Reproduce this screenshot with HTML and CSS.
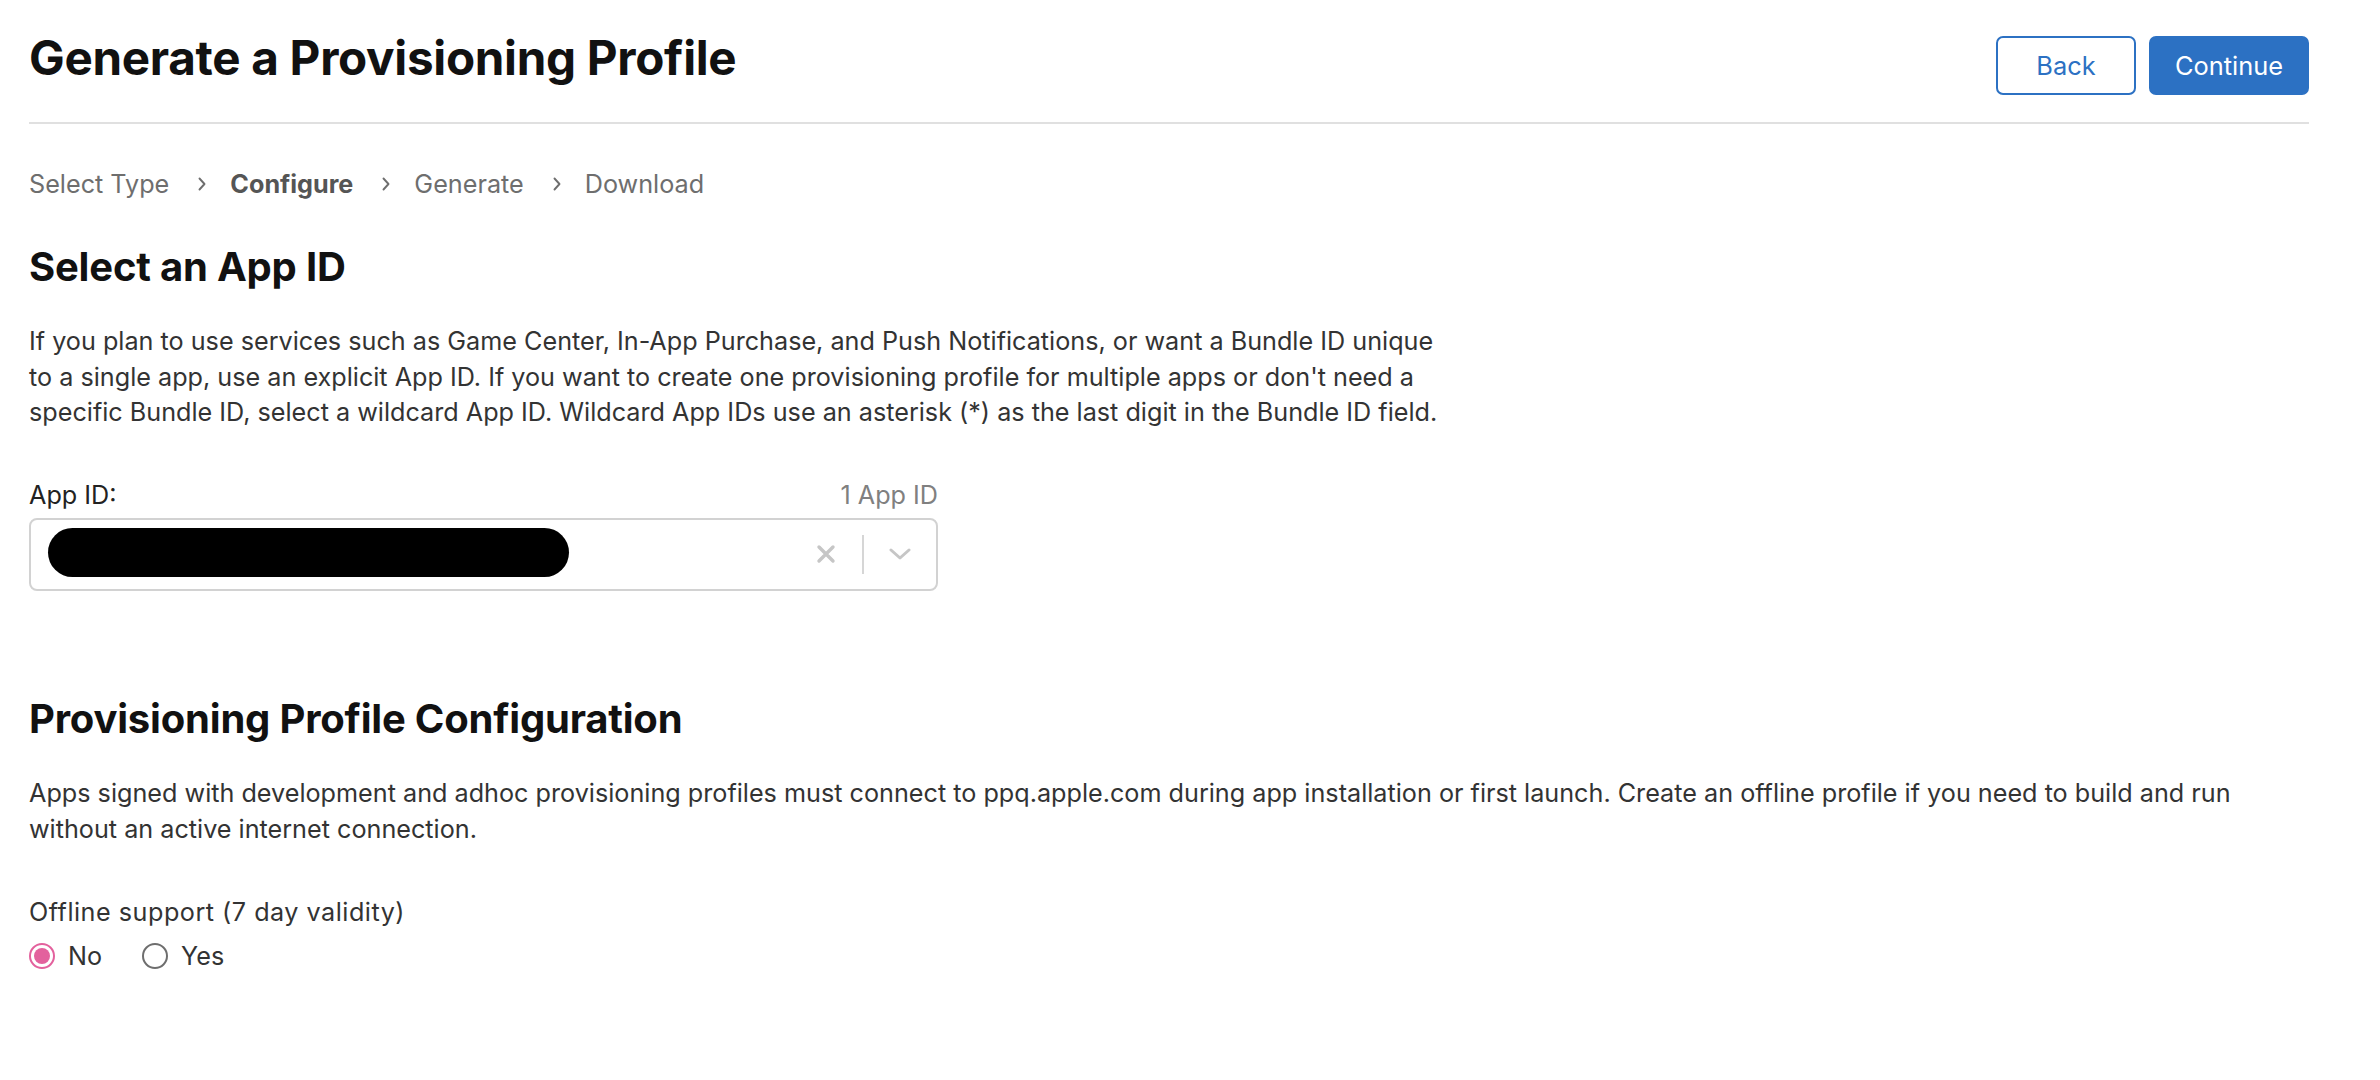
FILE: index.html
```html
<!DOCTYPE html>
<html lang="en">
<head>
<meta charset="utf-8">
<title>Generate a Provisioning Profile</title>
<link rel="stylesheet" href="styles.css">
</head>
<body>
<div class="page">
  <header class="top">
    <h1 class="title">Generate a Provisioning Profile</h1>
    <div class="actions">
      <button class="btn btn-outline" type="button">Back</button>
      <button class="btn btn-primary" type="button">Continue</button>
    </div>
  </header>

  <nav class="steps">
    <span class="step">Select Type</span>
    <svg class="chev" viewBox="0 0 10 16" aria-hidden="true"><path d="M2.5 2.5 L7.5 8 L2.5 13.5"/></svg>
    <span class="step current">Configure</span>
    <svg class="chev" viewBox="0 0 10 16" aria-hidden="true"><path d="M2.5 2.5 L7.5 8 L2.5 13.5"/></svg>
    <span class="step">Generate</span>
    <svg class="chev" viewBox="0 0 10 16" aria-hidden="true"><path d="M2.5 2.5 L7.5 8 L2.5 13.5"/></svg>
    <span class="step">Download</span>
  </nav>

  <section class="section">
    <h2 class="heading">Select an App ID</h2>
    <p class="desc narrow">If you plan to use services such as Game Center, In-App Purchase, and Push Notifications, or want a Bundle ID unique to a single app, use an explicit App ID. If you want to create one provisioning profile for multiple apps or don't need a specific Bundle ID, select a wildcard App ID. Wildcard App IDs use an asterisk (*) as the last digit in the Bundle ID field.</p>

    <div class="field">
      <div class="field-head">
        <span class="field-label">App ID:</span>
        <span class="field-count">1 App ID</span>
      </div>
      <div class="select">
        <span class="select-value"><span class="redacted"></span></span>
        <span class="select-clear">
          <svg viewBox="0 0 20 20" aria-hidden="true"><path d="M3 3 L17 17 M17 3 L3 17"/></svg>
        </span>
        <span class="select-sep"></span>
        <span class="select-arrow">
          <svg viewBox="0 0 22 12" aria-hidden="true"><path d="M2 2 L11 10 L20 2"/></svg>
        </span>
      </div>
    </div>
  </section>

  <section class="section config">
    <h2 class="heading">Provisioning Profile Configuration</h2>
    <p class="desc">Apps signed with development and adhoc provisioning profiles must connect to ppq.apple.com during app installation or first launch. Create an offline profile if you need to build and run without an active internet connection.</p>

    <div class="option-label">Offline support (7 day validity)</div>
    <div class="radios">
      <label class="radio"><span class="radio-dot checked"></span>No</label>
      <label class="radio"><span class="radio-dot"></span>Yes</label>
    </div>
  </section>
</div>
</body>
</html>
```

FILE: styles.css
```css
* { box-sizing: border-box; }

html, body {
  margin: 0;
  padding: 0;
  background: #ffffff;
}

body {
  font-family: Inter, "Noto Sans", "Liberation Sans", sans-serif;
  color: #333333;
  font-size: 25.2px;
  line-height: 36px;
}

.page {
  width: 2309px;
  padding-left: 29px;
}

/* Header */
.top {
  display: flex;
  justify-content: space-between;
  align-items: flex-start;
  padding-top: 30px;
  padding-bottom: 27px;
  border-bottom: 2px solid #e0e0e0;
}

.title {
  margin: 0;
  font-size: 47.6px;
  line-height: 56px;
  font-weight: 700;
  color: #111111;
  letter-spacing: -0.3px;
}

.actions {
  display: flex;
  gap: 13px;
  margin-top: 6px;
}

.btn {
  height: 59px;
  border-radius: 7px;
  font-family: inherit;
  font-size: 25.4px;
  padding: 0;
  cursor: pointer;
}

.btn-outline {
  width: 140px;
  background: #ffffff;
  color: #2c71c3;
  border: 2px solid #2c71c3;
}

.btn-primary {
  width: 160px;
  background: #2c71c3;
  color: #ffffff;
  border: 2px solid #2c71c3;
}

/* Steps */
.steps {
  display: flex;
  align-items: center;
  margin-top: 42px;
  height: 36px;
  color: #6e6e6e;
}

.step.current {
  font-weight: 700;
  color: #555555;
}

.chev {
  width: 10px;
  height: 16px;
  margin: 0 23px 0 28px;
  fill: none;
  stroke: #6e6e6e;
  stroke-width: 1.9;
  stroke-linecap: round;
  stroke-linejoin: round;
}

/* Sections */
.heading {
  margin: 0;
  font-size: 40px;
  line-height: 46px;
  font-weight: 700;
  color: #111111;
  letter-spacing: -0.2px;
}

.section {
  margin-top: 41.5px;
}

.section.config {
  margin-top: 105px;
}

.desc {
  margin: 34.5px 0 0;
  line-height: 35.5px;
  color: #333333;
}

.desc.narrow {
  max-width: 1425px;
}

/* Field */
.field {
  margin-top: 46px;
  width: 909px;
}

.field-head {
  display: flex;
  justify-content: space-between;
  align-items: flex-end;
}

.field-label {
  color: #222222;
}

.field-count {
  color: #808080;
}

.select {
  margin-top: 5px;
  height: 73px;
  border: 2px solid #d2d2d2;
  border-radius: 8px;
  display: flex;
  align-items: center;
  padding-left: 17px;
}

.select-value {
  flex: 1;
  display: flex;
  align-items: center;
}

.redacted {
  display: block;
  width: 521px;
  height: 49px;
  margin-top: -4px;
  background: #000000;
  border-radius: 25px;
}

.select-clear {
  width: 20px;
  height: 20px;
  display: flex;
  margin-right: 26px;
}

.select-clear svg {
  width: 20px;
  height: 20px;
  fill: none;
  stroke: #c6c6c6;
  stroke-width: 3.4;
  stroke-linecap: round;
}

.select-sep {
  width: 2px;
  height: 39px;
  background: #d6d6d6;
}

.select-arrow {
  width: 22px;
  height: 12px;
  display: flex;
  margin: 0 25px 0 25px;
}

.select-arrow svg {
  width: 22px;
  height: 12px;
  fill: none;
  stroke: #c6c6c6;
  stroke-width: 3;
  stroke-linecap: round;
  stroke-linejoin: round;
}

/* Options */
.option-label {
  margin-top: 47px;
  color: #333333;
  letter-spacing: 0.5px;
}

.radios {
  display: flex;
  align-items: center;
  gap: 40px;
  margin-top: 8px;
  height: 36px;
}

.radio {
  display: flex;
  align-items: center;
  gap: 13px;
  color: #333333;
}

.radio-dot {
  width: 26px;
  height: 26px;
  border-radius: 50%;
  border: 2px solid #6e6e6e;
  background: #ffffff;
  position: relative;
}

.radio-dot.checked {
  border-color: #e3619d;
}

.radio-dot.checked::after {
  content: "";
  position: absolute;
  left: 3px;
  top: 3px;
  width: 16px;
  height: 16px;
  border-radius: 50%;
  background: #e3619d;
}
```
